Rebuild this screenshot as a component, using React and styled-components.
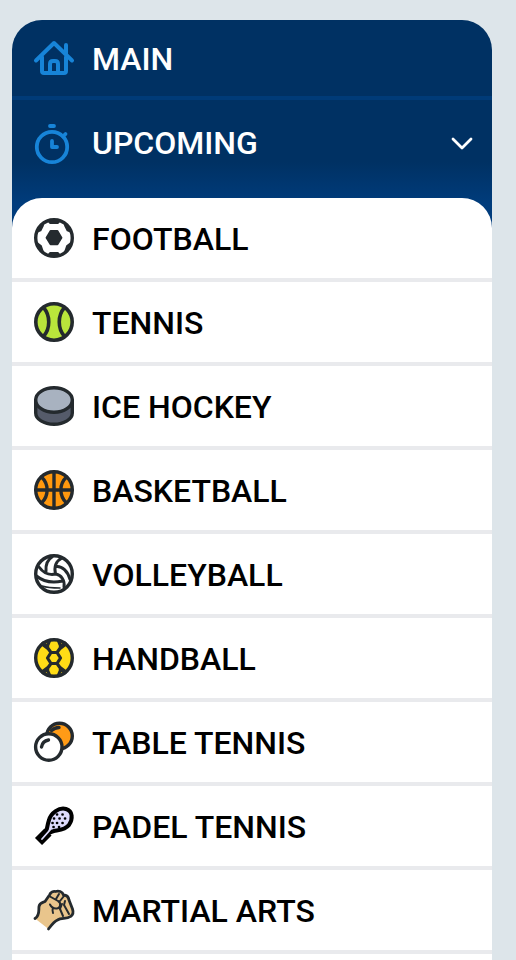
import React from 'react'
import styled, { createGlobalStyle } from 'styled-components'

const ink = '#242a2e'

const GlobalStyle = createGlobalStyle`
  * {
    box-sizing: border-box;
  }

  body {
    margin: 0;
    background: #dde5ea;
    font-family: Roboto, 'Liberation Sans', sans-serif;
  }
`

const Page = styled.div`
  display: flex;
  min-height: 100vh;
  padding: 20px 24px 0 12px;
`

const Sidebar = styled.nav`
  display: flex;
  flex: 1;
  flex-direction: column;
  border-radius: 30px 30px 0 0;
  background: linear-gradient(#003163 0, #003163 142px, #003c7c 184px);
  overflow: hidden;
`

const Item = styled.a`
  display: flex;
  align-items: center;
  gap: 18px;
  height: 80px;
  padding: 0 18px 0 22px;
  color: #000;
  font-size: 32px;
  font-weight: 500;
  line-height: 40px;
  text-decoration: none;
`

const MainItem = styled(Item)`
  height: 76px;
  color: #fff;
`

const Toggle = styled(Item)`
  width: 100%;
  height: 102px;
  padding-bottom: 14px;
  border: 0;
  border-top: 4px solid #003b78;
  background: none;
  color: #fff;
  font-family: inherit;
  text-align: left;
`

const Label = styled.span`
  flex: 1;
  padding-top: 2px;
`

const Sports = styled.ul`
  flex: 1;
  margin: 0;
  padding: 0;
  border-radius: 30px 30px 0 0;
  background: #fff;
  list-style: none;
`

const Sport = styled.li`
  border-bottom: 4px solid #e9eaed;
`

const Icon = styled.svg.attrs(p => ({ viewBox: p.viewBox || '0 0 40 40', 'aria-hidden': true }))`
  flex: none;
  width: 40px;
  height: 40px;
  overflow: visible;
  fill: none;
  stroke: ${p => p.$color || ink};
  stroke-width: ${p => p.$weight || 3.4};
  stroke-linecap: round;
  stroke-linejoin: round;
`

const Chevron = styled(Icon)`
  width: 24px;
  height: 24px;
`

const HomeIcon = () => (
  <Icon $color="#1784d8" $weight={4}>
    <path d="M2 22.5 20 5l18 17.5M32 17V7M8 19v14q0 2 2 2h20q2 0 2-2V19" />
    <path d="M16 34v-8q0-3 3-3h2q3 0 3 3v8" />
  </Icon>
)

const StopwatchIcon = () => (
  <Icon $color="#1784d8" $weight={3.8}>
    <circle cx="18" cy="25" r="15.2" />
    <path d="M16 4h4M29 14.5l2.500-2.500M18 19v6h5" />
  </Icon>
)

const FootballIcon = () => (
  <Icon>
    <circle cx="20" cy="20" r="18.3" fill="#fff" />
    <path
      d="M16.5 13h7l4 6.7-4 6.7h-7l-4-6.7zM14 2.5 16 5h8l2-2.5zM3 14l3.5-1.5 2.5-5-4 2zM37 14l-3.5-1.5-2.5-5 4 2zM3 25l4 3 2 6-4-3zM37 25l-4 3-2 6 4-3zM14 37.5l2-2.500h8l2 2.500z"
      fill={ink}
      strokeWidth="1.8"
    />
  </Icon>
)

const TennisIcon = () => (
  <Icon $weight={3.6}>
    <circle cx="20" cy="20" r="18.2" fill="#b9e53b" />
    <path d="M9.5 5.5c7 8 7 21 0 29M30.5 5.5c-7 8-7 21 0 29" />
  </Icon>
)

const HockeyIcon = () => (
  <Icon>
    <path d="M1.7 14v13c0 6 8 11.3 18.3 11.3S38.3 33 38.3 27V14z" fill="#555b6a" />
    <ellipse cx="20" cy="14" rx="18.3" ry="12.3" fill="#a8b2c0" />
  </Icon>
)

const BasketballIcon = () => (
  <Icon>
    <circle cx="20" cy="20" r="18.3" fill="#ff980e" />
    <path d="M20 2v36M2 20h36M7.5 7c7.5 7 7.5 19 0 26M32.5 7c-7.500 7-7.500 19 0 26" />
  </Icon>
)

const VolleyballIcon = () => (
  <Icon>
    <circle cx="20" cy="20" r="18.3" fill="#fff" />
    <path
      d="M12 17.500C11.500 12 13 6 18 3M21.500 20C20 13 22 7 28 4M22 12.500c6-1 12 5 14 13M22 20c5 1 9 6 8 13M5 13c5 7 10 8.500 17 7M2.500 22c6 5 14 7.500 26 5"
      strokeWidth="3"
    />
    <path d="M8 32c6 2 11 2 18 2" strokeWidth="1.5" />
  </Icon>
)

const HandballIcon = () => (
  <Icon>
    <circle cx="20" cy="20" r="18.3" fill="#ffdc16" />
    <path
      d="M17 14.500h6l3.500 5.500-3.500 5.500h-6L13.500 20zM17 14.500 13 9l2.500-6M23 14.500 27 9l-2.500-6M17 25.500 13 31l2.500 6M23 25.500 27 31l-2.500 6"
      strokeWidth="3.2"
    />
    <path d="M13 9 9 6M27 9l4-3M13 31l-4 3M27 31l4 3" strokeWidth="4.5" />
  </Icon>
)

const TableTennisIcon = () => (
  <Icon>
    <circle cx="25.5" cy="14" r="12.8" fill="#ff9b16" />
    <path d="M17.5 8.5q3-3 7.5-3" />
    <circle cx="14.8" cy="25" r="13.2" fill="#fff" />
    <path d="M7.5 25q1-6 7-7" />
  </Icon>
)

const PadelIcon = () => (
  <Icon $color="#000">
    <path d="M4.500 35.500 14 26" strokeWidth="10" strokeLinecap="butt" />
    <path
      d="M11 29c2-4 2-9 4-15C17 7 25 1 32 3c7 2 7 10 3 16-4 5-10 5-15 6-4 1-6 3-9 4z"
      fill="#dddafb"
      strokeWidth="4"
    />
    <path d="M16 24 8 33" stroke="#dddafb" strokeWidth="1.8" />
    <path
      d="M23 8.500h.1M28.500 8.500h.1M20 12.500h.1M25.500 12.500h.1M31 12.500h.1M18.500 17h.1M23 17h.1M28.500 17h.1M19.500 21h.1M25 21h.1"
      strokeWidth="2.6"
    />
  </Icon>
)

const FistIcon = () => (
  <Icon $weight={2.8}>
    <path
      d="M1 28.500c5-3 3.500-8 4-12 .500-4 4-4 6-5l4.500-6.500c1-3 4-4 6-3.500 3-1 7 0 8 3.500 4 0 5 2 5.500 5l3.500 9c1 3 .500 6-2 7.500-4 3-9 1-13 3.500-4 2-6 5-9 9z"
      fill="#e9c58c"
      stroke="none"
    />
    <path d="M1 28.500c5-3 3.500-8 4-12 .500-4 4-4 6-5l4.500-6.500c1-3 4-4 6-3.500 3-1 7 0 8 3.500 4 0 5 2 5.500 5l3.500 9c1 3 .500 6-2 7.500-4 3-9 1-13 3.500-4 2-6 5-9 9" />
    <path
      d="M16 6.500l8 4.500c4 2 2 8-2 7.500q-4 0-6-4M22 9l3-5M26 11l4-5M19 18q-1 2 0 5M28 14l-2 5 3 7M31 11l-1 4 5 9"
      strokeWidth="2"
    />
  </Icon>
)

const sports = [
  { name: 'FOOTBALL', icon: FootballIcon },
  { name: 'TENNIS', icon: TennisIcon },
  { name: 'ICE HOCKEY', icon: HockeyIcon },
  { name: 'BASKETBALL', icon: BasketballIcon },
  { name: 'VOLLEYBALL', icon: VolleyballIcon },
  { name: 'HANDBALL', icon: HandballIcon },
  { name: 'TABLE TENNIS', icon: TableTennisIcon },
  { name: 'PADEL TENNIS', icon: PadelIcon },
  { name: 'MARTIAL ARTS', icon: FistIcon },
]

const App = () => (
  <>
    <GlobalStyle />
    <Page>
      <Sidebar>
        <MainItem href="#main">
          <HomeIcon />
          <Label>MAIN</Label>
        </MainItem>
        <Toggle as="button" type="button" aria-expanded="true">
          <StopwatchIcon />
          <Label>UPCOMING</Label>
          <Chevron viewBox="0 0 24 24" $color="#fff" $weight={2.8}>
            <path d="M3 9l9 9 9-9" />
          </Chevron>
        </Toggle>
        <Sports>
          {sports.map(({ name, icon: SportIcon }) => (
            <Sport key={name}>
              <Item href={`#${name.toLowerCase().replace(' ', '-')}`}>
                <SportIcon />
                <Label>{name}</Label>
              </Item>
            </Sport>
          ))}
        </Sports>
      </Sidebar>
    </Page>
  </>
)

export default App
